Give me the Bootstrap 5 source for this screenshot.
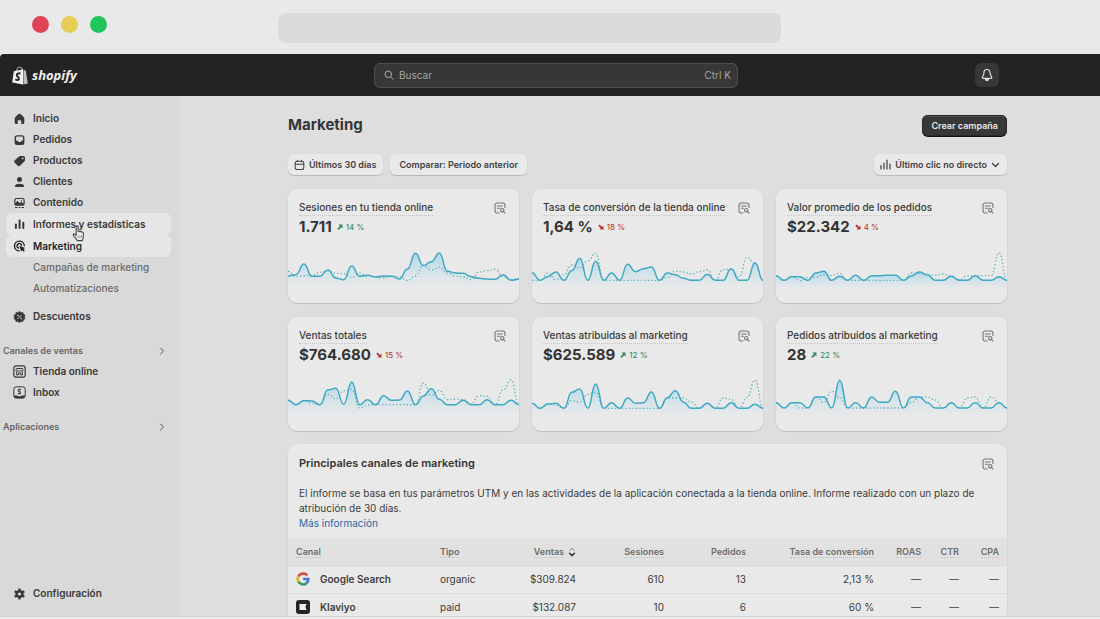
<!DOCTYPE html>
<html lang="es">
<head>
<meta charset="utf-8">
<meta name="viewport" content="width=device-width, initial-scale=1">
<title>Marketing · Shopify</title>
<link href="https://cdn.jsdelivr.net/npm/bootstrap@5.3.0/dist/css/bootstrap.min.css" rel="stylesheet">
<style>
  :root { --ink:#353535; --card:#e9e9e9; --line:#d6d6d6; }
  body { font-family:Inter,"Liberation Sans",sans-serif; font-size:10px; line-height:15px; color:var(--ink); background:#e9e9e9; }
  svg { display:block; flex:none; }
  .chrome { height:54px; padding:0 0 5px 32px; gap:12px; }
  .dot { width:17px; height:17px; }
  .address { height:30px; width:503px; margin:6px 0 0 159px; border-radius:8px; background:#dbdbdb; }
  .topbar { display:grid; grid-template-columns:1fr 364px 1fr; height:42px; padding-left:12px; background:#232323; border-radius:4px 0 0 0; }
  .wordmark { font:italic 700 13px/18px "Open Sans","Noto Sans",sans-serif; color:#eee; }
  .search { height:25px; border:1px solid #505050; border-radius:6px; background:#373737; color:#aaa; padding:0 6px 0 9px; gap:5px; }
  .search input { background:none; border:0; outline:0; padding:0; color:#ccc; min-width:0; }
  .search input::placeholder { color:#a6a6a6; opacity:1; }
  .search kbd { background:none; padding:0; font:inherit; color:#a6a6a6; }
  .bell { width:24px; height:24px; border:0; border-radius:6px; background:#373737; color:#ddd; margin-right:101px; padding:0; }
  .side { width:180px; background:#d9d9d9; padding:12px 9px 12px 6px; }
  .side a { height:21px; padding-left:7px; gap:7px; border-radius:6px; color:#383838; font-weight:600; text-decoration:none; }
  .side a.lit { height:22px; background:#e6e6e6; }
  .side a.sub { padding-left:27px; color:#6a6a6a; font-weight:500; }
  .side h2 { font-size:9px; line-height:21px; font-weight:600; color:#646464; margin:0 5px 0 -3px; padding-top:13px; }
  .side h2 svg { color:#555; }
  .hand { position:absolute; left:66px; top:12px; z-index:2; }
  .page { background:#dedede; padding-left:15px; overflow-y:auto; scrollbar-width:none; }
  .page::-webkit-scrollbar { display:none; }
  .column { max-width:719px; padding-top:18px; }
  h1 { font-size:15px; line-height:22px; font-weight:700; margin:0; }
  .filters { gap:7px; margin:18px 0 14px; }
  .pill { height:21px; border:0; border-radius:6px; background:var(--card); color:#3f3f3f; font-size:9px; font-weight:600; padding:0 9px; box-shadow:0 1px 1px #b4b4b4; }
  .pill.slim { padding:0 7px 0 6px; gap:4px; }
  .primary { background:#383838; color:#e8e8e8; box-shadow:inset 0 0 0 1px #2a2a2a,inset 0 2px 0 #505050,0 1px 0 #111; }
  .tiles { display:grid; grid-template-columns:repeat(3,1fr); gap:14px 13px; }
  .tile, .panel { background:var(--card); border-radius:9px; box-shadow:0 1px 1px #c2c2c2,0 0 0 1px #dadada; color:#777; }
  .panel { margin-top:13px; }
  .tile { height:114px; }
  .inset { padding-left:11px; padding-right:13px; }
  .tile .inset:first-child { padding-top:11px; }
  .tile h2 { font-size:10px; line-height:15px; font-weight:500; margin:0; border-bottom:1px dotted #c6c6c6; color:#3a3a3a; }
  .figure-now { font-size:15px; line-height:22px; font-weight:700; color:#333; }
  .delta { font-size:8px; gap:3px; }
  .up { color:#31845f; } .down { color:#b3312f; }
  .plot { height:50px; width:100%; overflow:visible; margin-top:7px; }
  .panel .inset { padding-top:12px; }
  .panel h2 { font-size:11px; line-height:15px; font-weight:600; margin:0; color:var(--ink); }
  .panel p { margin:15px 0 0; color:#3c3c3c; }
  .panel a { color:#2b67a8; text-decoration:none; }
  .grid { width:100%; table-layout:fixed; margin-top:7px; color:#3c3c3c; }
  .grid th, .grid td { padding:0 8px; height:28px; white-space:nowrap; }
  .grid thead th { height:27px; background:#e1e1e1; border-bottom:1px solid var(--line); font-size:9px; font-weight:600; color:#6c6c6c; }
  .grid thead span { border-bottom:1px dotted #c2c2c2; }
  .grid tbody tr { border-bottom:1px solid #dcdcdc; }
  .foot { height:3px; border-top:1px solid #d4d4d4; background:#ececec; }
</style>
</head>
<body class="d-flex flex-column vh-100 overflow-hidden">
<svg width="0" height="0" class="position-absolute" aria-hidden="true">
  <linearGradient id="wash" x1="0" y1="0" x2="0" y2="1"><stop offset="0" stop-color="#79c6e6" stop-opacity=".5"/><stop offset=".9" stop-color="#a9d9ec" stop-opacity="0"/></linearGradient>
  <symbol id="report" viewBox="0 0 12 12" fill="none" stroke="currentColor" stroke-width="1.1" stroke-linecap="round" stroke-linejoin="round"><path d="M5 11H3.2A2.2 2.2 0 0 1 1 8.800V3.200A2.200 2.200 0 0 1 3.200 1H8.800A2.200 2.200 0 0 1 11 3.200V5.500M3.500 4H8.500M3.500 6.300H5.500"/><circle cx="8.200" cy="8.200" r="1.700"/><path d="M9.500 9.500L11.200 11.200"/></symbol>
  <symbol id="rise" viewBox="0 0 6 6"><path d="M1.500 .5H5.500V4.500L4.200 3.200 1.500 5.900.3 4.700 3 2z" fill="currentColor"/></symbol>
  <symbol id="fall" viewBox="0 0 6 6"><path d="M5.500 1.500V5.500H1.500L2.800 4.200.3 1.700 1.500.5 4.200 2.900z" fill="currentColor"/></symbol>
  <symbol id="chev" viewBox="0 0 8 8"><path d="M2.500 1L5.500 4 2.500 7" fill="none" stroke="currentColor" stroke-width="1" stroke-linecap="round" stroke-linejoin="round"/></symbol>
</svg>

<div class="chrome d-flex align-items-center flex-shrink-0">
  <span class="dot rounded-circle" style="background:#e24256"></span>
  <span class="dot rounded-circle" style="background:#e7cd55"></span>
  <span class="dot rounded-circle" style="background:#1fc55c"></span>
  <div class="address"></div>
</div>

<header class="topbar align-items-center flex-shrink-0">
  <div class="d-flex align-items-center gap-1">
    <svg width="16" height="19" viewBox="0 0 16 19"><path d="M4.500 5C5 1.500 7 .8 8 1.200 9.500 1.200 10.300 2.500 10.700 4.200" fill="none" stroke="#999" stroke-width="1.100"/><path d="M1.800 5.200L11 3.300V18.500L.2 16.500z" fill="#f0f0f0"/><path d="M11.400 3.400L13.800 4.800 15.800 17.400 11.400 18.500z" fill="#bdbdbd"/><path d="M8.600 7.700C6.400 6.700 4.600 7.700 4.800 9.300 5 10.900 7.300 11.300 7 13 6.700 14.500 4.800 14.300 3.400 13.300" fill="none" stroke="#232323" stroke-width="1.900"/></svg>
    <span class="wordmark">shopify</span>
  </div>
  <label class="search d-flex align-items-center">
    <svg width="10" height="10" viewBox="0 0 10 10" fill="none" stroke="currentColor" stroke-linecap="round"><circle cx="4.300" cy="4.300" r="3.300"/><path d="M6.800 6.800L9.200 9.200"/></svg>
    <input class="flex-grow-1" type="search" placeholder="Buscar" aria-label="Buscar"><kbd>Ctrl K</kbd>
  </label>
  <button class="bell d-flex align-items-center justify-content-center ms-auto" aria-label="Notificaciones">
    <svg width="12" height="14" viewBox="0 0 12 14" fill="none" stroke="currentColor" stroke-width="1.200" stroke-linejoin="round"><path d="M6 1.500C3.800 1.500 2.900 3.200 2.900 5 2.900 7.500 1.200 8.500 1.200 9.600 1.200 10.200 1.500 10.300 2 10.300H10C10.500 10.300 10.800 10.200 10.800 9.600 10.800 8.500 9.100 7.500 9.100 5 9.100 3.200 8.200 1.500 6 1.500z"/><path d="M4.300 10.500C4.500 13.200 7.500 13.200 7.700 10.500" fill="currentColor"/></svg>
  </button>
</header>

<div class="d-flex flex-grow-1" style="min-height:0">
  <nav class="side d-flex flex-column flex-shrink-0">
    <a href="#" class="d-flex align-items-center"><svg width="13" height="12" viewBox="0 0 13 12"><path d="M5.200 1.200Q6.500.2 7.800 1.200L10.600 3.900Q11.300 4.600 11.300 5.500V9.500Q11.300 11 9.800 11H8.300V8.200Q8.300 7.300 7.500 7.300H5.500Q4.700 7.300 4.700 8.200V11H3.200Q1.700 11 1.700 9.500V5.500Q1.700 4.600 2.400 3.900z" fill="currentColor"/></svg>Inicio</a>
    <a href="#" class="d-flex align-items-center"><svg width="13" height="12" viewBox="0 0 13 12"><rect x="1.600" y="1.200" width="9.800" height="9.800" rx="2.500" fill="currentColor"/><path d="M3 3.700Q3 2.600 4 2.600H9Q10 2.600 10 3.700V6.500H8.700L7.700 7.900H5.300L4.300 6.500H3z" fill="#d9d9d9"/></svg>Pedidos</a>
    <a href="#" class="d-flex align-items-center"><svg width="13" height="12" viewBox="0 0 13 12"><path d="M7.500 1H10.500Q12 1 12 2.500V5Q12 5.700 11.500 6.200L7 10.700Q5.900 11.600 4.800 10.700L1.500 7.600Q.7 6.600 1.500 5.600L5.800 1.700Q6.500 1 7.500 1z" fill="currentColor"/><circle cx="9.700" cy="3.300" r=".9" fill="#d9d9d9"/></svg>Productos</a>
    <a href="#" class="d-flex align-items-center"><svg width="13" height="12" viewBox="0 0 13 12" fill="currentColor"><circle cx="6.500" cy="3.500" r="2.500"/><path d="M1.900 10.200C2.100 7 10.900 7 11.100 10.200Q11.100 11 10.300 11H2.700Q1.900 11 1.900 10.200z"/></svg>Clientes</a>
    <a href="#" class="d-flex align-items-center"><svg width="13" height="12" viewBox="0 0 13 12" fill="none" stroke="currentColor"><rect x="1.900" y="1.500" width="9.200" height="6.500" rx="1.500" stroke-width="1.200"/><path d="M2 7L4.500 4.300 6.700 6.500 8.500 5.200 11 7.500V8H2z" fill="currentColor"/><path d="M2 10.500H4.500M5.500 10.500H7.500M8.500 10.500H11" stroke-width="1.200"/><circle cx="8.600" cy="3.500" r=".6" fill="currentColor" stroke="none"/></svg>Contenido</a>
    <div class="position-relative">
      <a href="#" class="lit d-flex align-items-center"><svg width="13" height="12" viewBox="0 0 13 12" fill="currentColor"><rect x="1.900" y="5.500" width="2" height="5.500" rx="1"/><rect x="5.600" y="1.500" width="2" height="9.500" rx="1"/><rect x="9.300" y="3.800" width="2" height="7.200" rx="1"/></svg>Informes y estadísticas</a>
      <svg class="hand" width="14" height="17" viewBox="0 0 14 17" aria-hidden="true"><path d="M4.200 1.800Q4.300.8 5.200.8 6.100.8 6.200 1.800V6.600Q7 5.900 7.800 6.700 8.900 6 9.600 7.100 11.100 6.800 11.400 8.200V11Q11.400 13 10.300 15.600H5.200Q3.900 12.800 1.700 10.800.7 9.600 1.600 9 2.500 8.700 4.200 10.300z" fill="#eee" stroke="#444" stroke-width="1.100" stroke-linejoin="round"/><path d="M6.200 10.500V13M7.900 10.500V13M9.500 10.500V13" stroke="#777" stroke-width=".7"/></svg>
    </div>
    <a href="#" class="lit d-flex align-items-center text-dark"><svg width="13" height="12" viewBox="0 0 13 12" fill="none" stroke="#222" stroke-width="1.400" stroke-linecap="round"><path d="M6 10.900A4.900 4.900 0 1 1 11.300 5.500"/><path d="M5.500 8A2.300 2.300 0 1 1 8.500 5.200"/><path d="M6.300 5.800L12.200 7.900 10.600 9 11.800 10.700 10.700 11.700 9.200 10.200 8.200 11.500z" fill="#222" stroke="none"/></svg>Marketing</a>
    <a href="#" class="sub d-flex align-items-center">Campañas de marketing</a>
    <a href="#" class="sub d-flex align-items-center">Automatizaciones</a>
    <a href="#" class="d-flex align-items-center" style="margin-top:7px"><svg width="13" height="12" viewBox="0 0 13 12"><path d="M6.500.3L8 1.500 9.900 1.400 10.500 3.200 12.100 4.300 11.500 6 12.100 7.700 10.500 8.800 9.900 10.600 8 10.500 6.500 11.700 5 10.500 3.100 10.600 2.500 8.800.9 7.700 1.500 6 .9 4.300 2.500 3.200 3.100 1.400 5 1.500z" fill="currentColor" stroke="currentColor" stroke-width=".5" stroke-linejoin="round"/><path d="M4.700 7.800L8.300 4.200" stroke="#d9d9d9"/><circle cx="4.900" cy="4.500" r=".8" fill="#d9d9d9"/><circle cx="8.200" cy="7.600" r=".8" fill="#d9d9d9"/></svg>Descuentos</a>
    <h2 class="d-flex align-items-center justify-content-between">Canales de ventas<svg width="8" height="8"><use href="#chev"/></svg></h2>
    <a href="#" class="d-flex align-items-center"><svg width="13" height="13" viewBox="0 0 13 13" fill="none" stroke="currentColor"><rect x=".8" y=".8" width="11.400" height="11.400" rx="2.500" stroke-width="1.200"/><path d="M3.500 3.500H9.500L10.200 5.300Q9.400 6.600 8.200 5.700 6.500 6.900 4.800 5.700 3.600 6.600 2.800 5.300zM3.700 6.500V10H5.300V8H7.700V10H9.300V6.500"/></svg>Tienda online</a>
    <a href="#" class="d-flex align-items-center"><svg width="13" height="13" viewBox="0 0 13 13" fill="none" stroke="currentColor"><rect x=".8" y=".8" width="11.400" height="11.400" rx="2.500"/><path d="M1 9.500H4Q6.500 11.200 9 9.500H12V10.500Q11.500 12 10 12H3Q1.500 12 1 10.500z" fill="currentColor" stroke="none"/><path d="M8 3.700Q5.500 2.700 5.300 4.300 5.300 5.200 6.500 5.600 7.800 6.200 7.300 7.300 6.500 8.400 4.800 7.500" stroke-width="1.200"/></svg>Inbox</a>
    <h2 class="d-flex align-items-center justify-content-between">Aplicaciones<svg width="8" height="8"><use href="#chev"/></svg></h2>
    <a href="#" class="d-flex align-items-center mt-auto"><svg width="13" height="12" viewBox="0 0 13 12"><g stroke="currentColor" stroke-width="2.200"><path d="M6.500.5V11.500M1.700 3.200L11.300 8.800M11.300 3.200L1.700 8.800"/></g><circle cx="6.500" cy="6" r="4.100" fill="currentColor"/><circle cx="6.500" cy="6" r="1.600" fill="#d9d9d9"/></svg>Configuración</a>
  </nav>

  <main class="page flex-grow-1">
    <div class="column mx-auto">
      <div class="d-flex align-items-center justify-content-between">
        <h1>Marketing</h1>
        <button class="pill primary">Crear campaña</button>
      </div>
      <div class="filters d-flex align-items-center">
        <button class="pill slim d-flex align-items-center"><svg width="11" height="12" viewBox="0 0 12 12" fill="none" stroke="currentColor" stroke-width="1.100" stroke-linecap="round"><rect x="1.300" y="1.800" width="9.400" height="9.200" rx="2.300"/><path d="M1.500 5.300H10.500M3.700.7V2M8.300.7V2"/></svg>Últimos 30 días</button>
        <button class="pill">Comparar: Periodo anterior</button>
        <button class="pill slim d-flex align-items-center ms-auto"><svg width="11" height="11" viewBox="0 0 11 11" stroke="currentColor" stroke-width="1.200" stroke-linecap="round"><path d="M1 6.500V10M4 4V10M7 1V10M10 5V10"/></svg>Último clic no directo<svg width="9" height="8" viewBox="0 0 9 8" fill="none" stroke="currentColor" stroke-width="1.300" stroke-linecap="round" stroke-linejoin="round"><path d="M1.500 2.500L4.500 5.500 7.500 2.500"/></svg></button>
      </div>

      <section class="tiles" id="tiles"></section>

      <section class="panel">
        <div class="inset">
          <div class="d-flex justify-content-between align-items-center">
            <h2>Principales canales de marketing</h2>
            <svg width="12" height="12"><use href="#report"/></svg>
          </div>
          <p>El informe se basa en tus parámetros UTM y en las actividades de la aplicación conectada a la tienda online. Informe realizado con un plazo de atribución de 30 días.<br><a href="#">Más información</a></p>
        </div>
        <table class="grid">
          <colgroup><col><col style="width:80px"><col style="width:72px"><col style="width:88px"><col style="width:82px"><col style="width:128px"><col style="width:47px"><col style="width:38px"><col style="width:40px"></colgroup>
          <thead><tr><th><span>Canal</span></th><th><span>Tipo</span></th><th class="text-end"><span>Ventas</span><svg class="d-inline-block align-middle ms-1" width="8" height="10" viewBox="0 0 8 10" fill="none" stroke-linecap="round" stroke-linejoin="round"><path d="M1.500 3.500L4 1.200 6.500 3.500" stroke="#888"/><path d="M1.500 6.300L4 8.600 6.500 6.300" stroke="#333" stroke-width="1.500"/></svg></th><th class="text-end"><span>Sesiones</span></th><th class="text-end"><span>Pedidos</span></th><th class="text-end"><span>Tasa de conversión</span></th><th class="text-end"><span>ROAS</span></th><th class="text-end"><span>CTR</span></th><th class="text-end"><span>CPA</span></th></tr></thead>
          <tbody>
            <tr><td><div class="d-flex align-items-center fw-semibold"><svg class="me-2" width="16" height="14" viewBox="0 0 16 14" fill="none" stroke-width="2.600"><path d="M11.300 3.400A5.400 5.400 0 0 0 2.400 4.300" stroke="#d8473c"/><path d="M2.400 4.300A5.400 5.400 0 0 0 2.400 9.700" stroke="#e3b32b"/><path d="M2.400 9.700A5.400 5.400 0 0 0 10.500 11.200" stroke="#3a9b55"/><path d="M10.500 11.200A5.400 5.400 0 0 0 12.300 7H7.200" stroke="#3f79d8"/></svg>Google Search</div></td><td>organic</td><td class="text-end">$309.824</td><td class="text-end">610</td><td class="text-end">13</td><td class="text-end">2,13 %</td><td class="text-end">—</td><td class="text-end">—</td><td class="text-end">—</td></tr>
            <tr><td><div class="d-flex align-items-center fw-semibold"><svg class="me-2" width="16" height="14" viewBox="0 0 16 14"><rect width="14" height="14" rx="3" fill="#252525"/><path d="M3.500 4H10.500L9.500 7 10.500 10H3.500z" fill="#eee"/></svg>Klaviyo</div></td><td>paid</td><td class="text-end">$132.087</td><td class="text-end">10</td><td class="text-end">6</td><td class="text-end">60 %</td><td class="text-end">—</td><td class="text-end">—</td><td class="text-end">—</td></tr>
          </tbody>
        </table>
      </section>
    </div>
  </main>
</div>
<footer class="foot flex-shrink-0"></footer>

<script src="https://cdn.jsdelivr.net/npm/bootstrap@5.3.0/dist/js/bootstrap.bundle.min.js"></script>
<script>
// Thirty daily readings per series; larger numbers sit lower in the plot, `top` is the value at its upper edge.
const flat = (n, v) => Array(n).fill(v);
const tiles = [
 { t:'Sesiones en tu tienda online', n:'1.711', d:'14 %', up:true, top:195,
   now:[288,284,252,289,289,270,294,299,258,289,286,291,288,289,297,267,220,257,245,219,274,279,280,290,295,297,298,284,301,297],
   was:[274,290,288,286,277,272,280,281,292,280,288,291,294,288,290,302,288,256,270,262,280,288,291,299,276,272,268,290,298,297] },
 { t:'Tasa de conversión de la tienda online', n:'1,64 %', d:'18 %', up:false, top:195,
   now:[278,301,290,276,301,272,235,301,244,301,279,301,253,275,266,261,301,279,284,295,301,301,283,301,301,266,301,301,249,301],
   was:[301,301,279,300,284,255,264,243,220,...flat(8,301),292,273,276,282,275,270,300,269,268,290,232,250,301] },
 { t:'Valor promedio de los pedidos', n:'$22.342', d:'4 %', up:false, top:195,
   now:[287,301,290,290,301,279,274,301,289,301,286,301,288,287,286,286,301,288,276,284,301,301,289,301,301,287,301,301,290,301],
   was:[287,301,289,302,293,292,284,286,280,...flat(8,301),279,280,286,285,282,288,300,288,288,287,287,218,301] },
 { t:'Ventas totales', n:'$764.680', d:'15 %', up:false, top:189,
   now:[271,284,272,273,284,240,235,283,216,284,269,284,257,271,270,243,284,258,236,268,284,284,271,284,284,269,284,284,271,284],
   was:[271,284,271,280,284,253,266,242,238,294,285,...flat(6,284),219,256,241,269,267,269,282,257,259,284,240,210,284] },
 { t:'Ventas atribuidas al marketing', n:'$625.589', d:'12 %', up:true, top:189,
   now:[280,295,282,280,295,247,237,295,222,295,278,295,264,280,278,246,295,263,242,276,295,295,280,295,295,278,295,295,283,295],
   was:[280,295,282,285,295,272,276,253,247,...flat(8,295),264,264,264,276,295,280,295,264,268,295,262,211,295] },
 { t:'Pedidos atribuidos al marketing', n:'28', d:'22 %', up:true, top:189,
   now:[278,294,278,278,294,261,261,294,211,294,278,294,261,277,277,244,294,261,261,278,294,294,278,294,294,278,294,294,278,294],
   was:[278,294,278,294,294,261,277,244,262,...flat(8,294),277,261,261,270,294,278,294,264,261,294,261,278,294] }
];
// Smooth curve that runs level through each of the equally spaced readings.
const curve = v => v.reduce((d, y, i) => i ? `${d}C${i*24-12} ${v[i-1]} ${i*24-12} ${y} ${i*24} ${y}` : `M0 ${y}`, '');
document.getElementById('tiles').innerHTML = tiles.map(c => {
  const now = curve(c.now), end = c.top + 140;
  return `<article class="tile">
    <div class="inset d-flex justify-content-between align-items-center"><h2>${c.t}</h2><svg width="12" height="12"><use href="#report"/></svg></div>
    <div class="inset d-flex align-items-center" style="gap:5px"><span class="figure-now">${c.n}</span><span class="delta d-flex align-items-center ${c.up ? 'up' : 'down'}"><svg width="6" height="6"><use href="#${c.up ? 'rise' : 'fall'}"/></svg>${c.d}</span></div>
    <svg class="plot" viewBox="0 ${c.top} 696 150" preserveAspectRatio="none" fill="none" aria-hidden="true">
      <path d="${now}V${end}H0z" fill="url(#wash)"/>
      <path d="${curve(c.was)}" stroke="#56b3b8" stroke-width="1.300" stroke-dasharray="1.300 2.200" vector-effect="non-scaling-stroke"/>
      <path d="${now}" stroke="#3fa9c4" stroke-width="1.500" vector-effect="non-scaling-stroke"/>
    </svg></article>`;
}).join('');
</script>
</body>
</html>
